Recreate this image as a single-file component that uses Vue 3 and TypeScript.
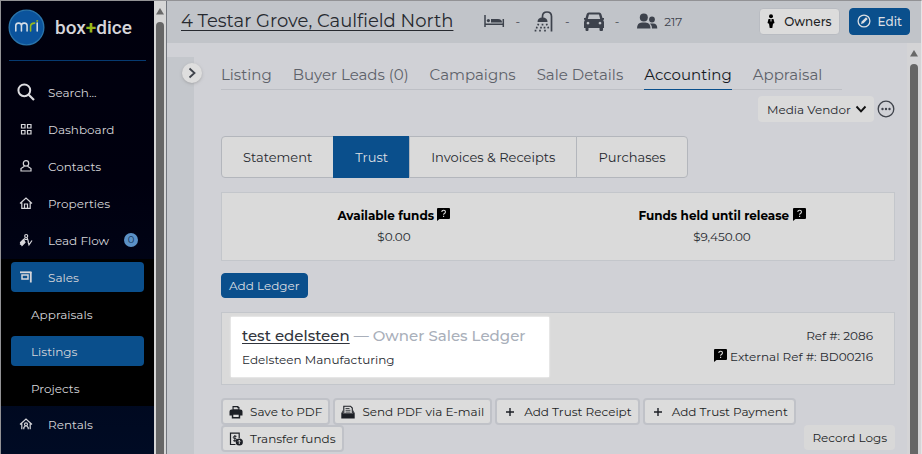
<script setup lang="ts">
import { ref } from 'vue'

interface NavItem { label: string; icon: string; badge?: number }

const navItems: NavItem[] = [
  { label: 'Dashboard', icon: 'grid' },
  { label: 'Contacts', icon: 'person' },
  { label: 'Properties', icon: 'home' },
  { label: 'Lead Flow', icon: 'flow', badge: 0 },
]
const salesItems: string[] = ['Appraisals', 'Listings', 'Projects']
const tabs: string[] = ['Listing', 'Buyer Leads (0)', 'Campaigns', 'Sale Details', 'Accounting', 'Appraisal']
const segments: string[] = ['Statement', 'Trust', 'Invoices & Receipts', 'Purchases']
const actions: NavItem[] = [
  { label: 'Save to PDF', icon: 'print' },
  { label: 'Send PDF via E-mail', icon: 'mail' },
  { label: 'Add Trust Receipt', icon: 'plus' },
  { label: 'Add Trust Payment', icon: 'plus' },
  { label: 'Transfer funds', icon: 'transfer' },
]

const activeSub = ref('Listings')
const activeTab = ref('Accounting')
const activeSegment = ref('Trust')
const recipient = ref('Media Vendor')
</script>

<template>
  <div class="app">
    <aside class="sidebar">
      <div class="brand">
        <svg class="logo" viewBox="0 0 38 38" aria-hidden="true">
          <circle cx="19" cy="19" r="17.8" fill="#0b539c" stroke="#2a74ab" stroke-width="1.4" />
          <g fill="none" stroke-width="1.6" stroke-linecap="round">
            <path d="M8 22.500v-5.200q0-2.800 2.600-2.800h.6q2.600 0 2.600 2.800v5.200M13.800 22.500v-5.200q0-2.800 2.600-2.800h.6q2.600 0 2.600 2.800v5.200" stroke="#d5dde6" />
            <path d="M23.200 22.500v-4.500q0-3.500 4.200-3.500" stroke="#97b81c" />
            <path d="M30 14.500v8" stroke="#d5dde6" />
          </g>
          <circle cx="30" cy="12.200" r="1" fill="#97b81c" />
        </svg>
        <span class="brand-name">box<span class="plus">+</span>dice</span>
      </div>

      <nav class="nav">
        <label class="nav-item">
          <svg class="search-icon" viewBox="0 0 18 18" aria-hidden="true">
            <circle cx="7.3" cy="7.3" r="5.9" fill="none" stroke="#dcdce0" stroke-width="2" />
            <path d="M11.700 11.700L17 17" stroke="#dcdce0" stroke-width="2.200" />
          </svg>
          <input class="search" type="text" placeholder="Search..." aria-label="Search" />
        </label>
        <a v-for="item in navItems" :key="item.label" class="nav-item" href="#">
          <svg class="nav-icon" viewBox="0 0 14 14" aria-hidden="true">
            <path v-if="item.icon === 'grid'" d="M2.500 2.500h3.500v3.500h-3.500zM8.500 2.500h3.500v3.500h-3.500zM2.500 8.500h3.500v3.500h-3.500zM8.500 8.500h3.500v3.500h-3.500z" />
            <g v-else-if="item.icon === 'person'">
              <circle cx="7" cy="4.400" r="2.700" />
              <path d="M5.500 7.300L2 9.500v2.500h10V9.500L8.500 7.300" />
            </g>
            <path v-else-if="item.icon === 'home'" d="M1 7.500L7 2l6 5.500M2.800 6.500v5.800h8.400V6.500M5.500 12V8h3v4" />
            <g v-else>
              <circle cx="7.200" cy="3" r="1.500" />
              <path d="M6.400 4.500L4 8M8 4.500l1.500 4.500M6 6.500h2.500M9 8.500l1 3.300L13 7.500M1 11.500l3-2.500" />
              <path d="M1.500 9.500L4.500 6.500l1.500 3L3 12.500z" fill="currentColor" />
            </g>
          </svg>
          <span>{{ item.label }}</span>
          <span v-if="item.badge !== undefined" class="badge">{{ item.badge }}</span>
        </a>
      </nav>

      <nav class="nav nav-open">
        <a class="nav-item active" href="#">
          <svg class="nav-icon" viewBox="0 0 14 14" aria-hidden="true">
            <path d="M1 2.300h11.500" stroke-width="1.800" />
            <path d="M11.800 2v10.500" stroke-width="1.800" />
            <path d="M3 5h6v4H3z" stroke-width="1.500" />
          </svg>
          <span>Sales</span>
        </a>
        <a
          v-for="label in salesItems"
          :key="label"
          class="nav-item sub"
          :class="{ active: label === activeSub }"
          href="#"
          @click.prevent="activeSub = label"
        >{{ label }}</a>
      </nav>

      <nav class="nav">
        <a class="nav-item" href="#">
          <svg class="nav-icon" viewBox="0 0 14 14" aria-hidden="true">
            <path d="M1 7.500L7 2l6 5.500M2.800 6.500v5.800M11.200 6.500v5.800M4.800 12.300V10.500l1.500-1.500M9.200 12.300V10.500L7.700 9" />
            <circle cx="7" cy="7.300" r="1.500" />
          </svg>
          <span>Rentals</span>
        </a>
      </nav>
    </aside>

    <div class="scrollbar side-bar" aria-hidden="true">
      <svg class="arrow" viewBox="0 0 8 7"><path d="M4 0l4 6.500H0z" /></svg>
      <div class="thumb"></div>
    </div>

    <div class="main">
      <header class="topbar">
        <a class="address" href="#">4 Testar Grove, Caulfield North</a>
        <div class="facts">
          <span class="fact">
            <svg class="fact-icon" viewBox="0 0 22 22" aria-hidden="true">
              <path d="M2 5v12M1.500 14.200h19M20.300 9v8" fill="none" stroke="currentColor" stroke-width="1.500" />
              <circle cx="5.400" cy="10.600" r="1.600" />
              <path d="M8 12.500V9h7q4 0 4 3.500z" />
            </svg>-
          </span>
          <span class="fact">
            <svg class="fact-icon" viewBox="0 0 22 22" aria-hidden="true">
              <path d="M18.500 21.500V6.500Q18.500 2 14 2t-4.500 4.500v1.500" fill="none" stroke="currentColor" stroke-width="1.700" />
              <path d="M4.500 12q0-4.500 5-4.500t5 4.500z" />
              <path d="M5.500 13.800l-.6 1.600M9.500 13.800v1.600M13.500 13.800l.6 1.600M4 16.800l-.5 1.600M8 16.800v1.600M11.500 16.800v1.600M15 16.800l.4 1.600M2.500 19.800v1.600M7 19.800v1.600M12 19.800v1.600" stroke="currentColor" stroke-width="1.700" />
            </svg>-
          </span>
          <span class="fact">
            <svg class="fact-icon" viewBox="0 0 22 22" aria-hidden="true">
              <path fill-rule="evenodd" d="M5.800 2.500h10.400q1.600 0 2.100 1.500L19.500 8H21v1.500l-.8.5.8 2v6h-1v2q0 1-1 1h-1.500q-1 0-1-1v-2h-11v2q0 1-1 1H3.500q-1 0-1-1v-2H1v-6l.8-2L1 9.500V8h1.500L3.700 4q.5-1.500 2.100-1.500zM6 4.500L4.800 9h12.400L16 4.500zM5 11.700a1.400 1.400 0 1 0 .01 0zM17 11.700a1.400 1.400 0 1 0 .01 0z" />
            </svg>-
          </span>
          <span class="fact people">
            <svg class="fact-icon" viewBox="0 0 22 22" aria-hidden="true">
              <circle cx="7.800" cy="7.500" r="4" />
              <path d="M1 18.500q0-6 5-6h3.500q5 0 5 6z" />
              <circle cx="16" cy="9.500" r="2.900" />
              <path d="M14 13.500h3q4.300 0 4.300 5H16q0-3-2-5z" />
            </svg>217
          </span>
        </div>
        <div class="top-actions">
          <button class="btn" type="button">
            <svg class="owner-icon" viewBox="0 0 8 14" aria-hidden="true">
              <circle cx="4" cy="2.200" r="2" />
              <path d="M1.500 5h5L7.500 9l-1.500.8L5.300 14H2.700L2 9.800.5 9z" />
              <path d="M4 4.800v2.700" stroke="#dcdcdc" />
            </svg>
            Owners
          </button>
          <button class="btn primary" type="button">
            <svg class="edit-icon" viewBox="0 0 14 14" aria-hidden="true">
              <circle cx="7" cy="7" r="5.900" fill="none" stroke="currentColor" stroke-width="1.300" />
              <path d="M4 10l.7-2.500L9 3.300 10.700 5 6.500 9.300z" fill="currentColor" />
            </svg>
            Edit
          </button>
        </div>
      </header>

      <div class="body">
        <div class="rail">
          <button class="expand" type="button" aria-label="Expand panel">
            <svg viewBox="0 0 10 12" aria-hidden="true"><path d="M2.500 1.500L7.500 6l-5 4.500" fill="none" stroke="#3f434b" stroke-width="1.800" /></svg>
          </button>
        </div>

        <main class="content">
          <nav class="tabs">
            <a
              v-for="tab in tabs"
              :key="tab"
              class="tab"
              :class="{ current: tab === activeTab }"
              href="#"
              @click.prevent="activeTab = tab"
            >{{ tab }}</a>
          </nav>

          <div class="tools">
            <div class="select-wrap">
              <select v-model="recipient" class="select" aria-label="Recipient">
                <option>Media Vendor</option>
              </select>
              <svg class="chevron" viewBox="0 0 12 8" aria-hidden="true"><path d="M1.500 1.500L6 6.300l4.500-4.800" fill="none" stroke="#111" stroke-width="1.900" /></svg>
            </div>
            <button class="more" type="button" aria-label="More options">
              <svg viewBox="0 0 18 18" aria-hidden="true">
                <circle cx="9" cy="9" r="7.800" fill="none" stroke="#3f434b" stroke-width="1.300" />
                <g fill="#3f434b"><circle cx="5.500" cy="9" r="1.200" /><circle cx="9" cy="9" r="1.200" /><circle cx="12.500" cy="9" r="1.200" /></g>
              </svg>
            </button>
          </div>

          <div class="segments">
            <button
              v-for="segment in segments"
              :key="segment"
              class="segment"
              :class="{ chosen: segment === activeSegment }"
              type="button"
              @click="activeSegment = segment"
            >{{ segment }}</button>
          </div>

          <section class="card funds">
            <div class="fund">
              <strong>Available funds
                <svg class="help" viewBox="0 0 13 13" aria-hidden="true"><path d="M1 0h11q1 0 1 1v9q0 1-1 1H2.500L0 13V1Q0 0 1 0z" /><path d="M4.800 4q0-1.700 1.800-1.700T8.400 4q0 1-1 1.400-.8.400-.8 1.300M6.600 7.700V9" fill="none" stroke="#dcdcdc" stroke-width="1.100" /></svg>
              </strong>
              <span>$0.00</span>
            </div>
            <div class="fund">
              <strong>Funds held until release
                <svg class="help" viewBox="0 0 13 13" aria-hidden="true"><path d="M1 0h11q1 0 1 1v9q0 1-1 1H2.500L0 13V1Q0 0 1 0z" /><path d="M4.800 4q0-1.700 1.800-1.700T8.400 4q0 1-1 1.400-.8.400-.8 1.300M6.600 7.700V9" fill="none" stroke="#dcdcdc" stroke-width="1.100" /></svg>
              </strong>
              <span>$9,450.00</span>
            </div>
          </section>

          <button class="btn primary add" type="button">Add Ledger</button>

          <section class="card ledger">
            <div class="spotlight">
              <h2 class="ledger-title"><a href="#">test edelsteen</a> — Owner Sales Ledger</h2>
              <p>Edelsteen Manufacturing</p>
            </div>
            <div class="refs">
              <span>Ref #: 2086</span>
              <span>
                <svg class="help" viewBox="0 0 13 13" aria-hidden="true"><path d="M1 0h11q1 0 1 1v9q0 1-1 1H2.500L0 13V1Q0 0 1 0z" /><path d="M4.800 4q0-1.700 1.800-1.700T8.400 4q0 1-1 1.400-.8.400-.8 1.300M6.600 7.700V9" fill="none" stroke="#dcdcdc" stroke-width="1.100" /></svg>
                External Ref #: BD00216
              </span>
            </div>
          </section>

          <div class="actions">
            <button v-for="action in actions" :key="action.label" class="btn action" type="button">
              <svg class="action-icon" viewBox="0 0 14 14" aria-hidden="true">
                <g v-if="action.icon === 'print'">
                  <path d="M3.500 1h5.500l1.500 1.500V5h-7z" />
                  <path d="M4.600 2.200h3.700v1h1v1.300H4.600z" fill="#dcdcdc" />
                  <path fill-rule="evenodd" d="M2.500 4.500h9Q13.500 4.500 13.500 6.500v4h-2.300V13.500H2.800V10.500H.5v-4Q.5 4.500 2.500 4.500zM4.300 9.800v2.300h5.400V9.800z" />
                </g>
                <g v-else-if="action.icon === 'mail'">
                  <path d="M2.800 8V1.200h6.700L11.300 3v5" fill="none" stroke="currentColor" stroke-width="1.100" />
                  <path d="M4.500 3.500h4M4.500 5.300h5M4.500 7.100h5" stroke="currentColor" stroke-width=".8" />
                  <path d="M.3 8.300L1.800 5v3.300h10.400V5l1.500 3.300v5.200H.3z" />
                </g>
                <path v-else-if="action.icon === 'plus'" d="M7 3v8M3 7h8" stroke="currentColor" stroke-width="1.400" />
                <g v-else>
                  <path d="M10.200 6V1.200H1.500v11.300H6.500" fill="none" stroke="currentColor" stroke-width="1.200" />
                  <path d="M7.500 4.300H5.500q-1.200 0-1.200 1.100t1.200 1.100h.8q1.200 0 1.200 1.100t-1.200 1.100H4.200M5.900 3v7" fill="none" stroke="currentColor" />
                  <circle cx="10.300" cy="10" r="3.600" />
                  <path d="M10.300 12V8.300M9 9.500l1.300-1.300 1.300 1.300" fill="none" stroke="#dcdcdc" stroke-width=".9" />
                </g>
              </svg>
              {{ action.label }}
            </button>
            <button class="btn logs" type="button">Record Logs</button>
          </div>
        </main>

        <div class="scrollbar page-bar" aria-hidden="true">
          <svg class="arrow" viewBox="0 0 8 7"><path d="M4 0l4 6.500H0z" /></svg>
          <div class="thumb"></div>
        </div>
      </div>
    </div>
  </div>
</template>

<style>
body {
  margin: 0;
  overflow: hidden;
}
</style>

<style scoped>
* {
  box-sizing: border-box;
}
.app {
  display: flex;
  height: 100vh;
  overflow: hidden;
  border-top: 1px solid #929295;
  border-left: 1px solid #929295;
  border-right: 1px solid #e4e4e6;
  background: #d0d1d6;
  color: #26292f;
  font-family: Montserrat, Inter, sans-serif;
  font-size: 12px;
}
a {
  color: inherit;
  text-decoration: none;
}
button,
input,
select {
  font: inherit;
  color: inherit;
}
button {
  cursor: pointer;
}

.sidebar {
  flex: 0 0 153px;
  background: linear-gradient(#00000d, #00000f 40%, #000b24);
  color: #d6d6da;
}
.brand {
  display: flex;
  align-items: center;
  gap: 10px;
  height: 60px;
  margin: 0 8px 13px;
  padding-bottom: 6px;
  border-bottom: 1px solid #063a70;
}
.logo {
  flex: none;
  width: 37px;
  height: 37px;
  margin-left: -1px;
}
.brand-name {
  font-family: Roboto, sans-serif;
  font-size: 19px;
  font-weight: 500;
}
.plus {
  color: #97b81c;
  font-weight: 700;
}
.nav {
  display: flex;
  flex-direction: column;
  gap: 7px;
  padding: 3px 10px 4px;
}
.nav-open {
  padding-bottom: 3px;
  background: #000;
}
.nav-item {
  display: flex;
  align-items: center;
  gap: 15px;
  height: 30px;
  padding-left: 8px;
  border-radius: 4px;
  white-space: nowrap;
}
.nav-item.sub {
  padding-left: 20px;
}
.nav-item.active {
  background: #0a4f8c;
}
.nav-icon {
  flex: none;
  width: 14px;
  height: 14px;
  fill: none;
  stroke: currentColor;
  stroke-width: 1.2;
}
.search-icon {
  flex: none;
  width: 18px;
  height: 18px;
  margin: 0 -2px;
}
.search {
  width: 80px;
  padding: 0;
  border: 0;
  outline: 0;
  background: none;
}
.search::placeholder {
  color: inherit;
  opacity: 1;
}
.badge {
  width: 14px;
  height: 14px;
  border-radius: 50%;
  background: #5b91c6;
  color: #12335a;
  font-size: 10px;
  line-height: 14px;
  text-align: center;
}

.scrollbar {
  display: flex;
  flex-direction: column;
  align-items: center;
  flex: none;
}
.side-bar {
  width: 13px;
  border-right: 1px solid #72767e;
  background: #d6d6d6;
}
.page-bar {
  width: 14px;
  background: #d4d4d6;
}
.arrow {
  width: 8px;
  height: 7px;
  margin: 7px 0;
  fill: #686868;
}
.thumb {
  flex: 1;
  width: 8px;
  border-radius: 4px 4px 0 0;
  background: #666;
}

.main {
  display: flex;
  flex: 1;
  flex-direction: column;
  min-width: 0;
}
.topbar {
  display: flex;
  align-items: center;
  flex: none;
  height: 42px;
  padding: 0 11px 2px 14px;
  background: #c1c4c9;
}
.address {
  font-size: 18px;
  text-decoration: underline;
  text-decoration-thickness: 1px;
  text-underline-offset: 3px;
  white-space: nowrap;
}
.facts {
  display: flex;
  gap: 13px;
  margin-left: 30px;
  color: #3d424c;
}
.fact {
  display: flex;
  align-items: center;
  gap: 10px;
}
.people {
  gap: 6px;
  margin-left: 4px;
}
.fact-icon {
  width: 22px;
  height: 22px;
  fill: currentColor;
}
.top-actions {
  display: flex;
  gap: 9px;
  margin-left: auto;
}
.btn {
  display: inline-flex;
  align-items: center;
  justify-content: center;
  gap: 7px;
  height: 27px;
  padding: 0 7px;
  border: 1px solid #b9bcc2;
  border-radius: 4px;
  background: #dcdcdc;
  color: #1c1f25;
  white-space: nowrap;
}
.btn.primary {
  border-color: #0a4f8c;
  background: #0a4f8c;
  color: #dcdfe3;
}
.top-actions .btn {
  font-weight: 500;
}
.owner-icon {
  width: 8px;
  height: 14px;
  margin-right: 2px;
}
.edit-icon {
  width: 14px;
  height: 14px;
}

.body {
  display: flex;
  flex: 1;
  min-height: 0;
}
.rail {
  flex: 0 0 27px;
  min-width: 0;
  width: 27px;
  margin-top: 14px;
  padding: 6px 0 0 15px;
  background: #c4c7cc;
}
.expand {
  display: flex;
  align-items: center;
  justify-content: center;
  width: 20px;
  height: 20px;
  padding: 0;
  border: 0;
  border-radius: 50%;
  background: #dedede;
  box-shadow: 0 1px 3px #8888;
}
.expand svg {
  flex: none;
  width: 10px;
  height: 12px;
}
.content {
  flex: 1;
  min-width: 0;
  padding: 18px 12px 0 27px;
}
.tabs {
  display: flex;
  gap: 21px;
  width: fit-content;
  padding-right: 20px;
  border-bottom: 1px solid #bdbfc5;
}
.tab {
  height: 29px;
  margin-bottom: -1px;
  border-bottom: 1px solid transparent;
  color: #5e626a;
  font-size: 15px;
  line-height: 28px;
  white-space: nowrap;
}
.tab.current {
  border-color: #0a4f8c;
  color: #16191f;
}
.tools {
  display: flex;
  justify-content: flex-end;
  align-items: center;
  gap: 3px;
  margin-top: 6px;
}
.select-wrap {
  display: flex;
  align-items: center;
  width: 116px;
  height: 26px;
  border-radius: 4px;
  background: #dadada;
}
.select {
  width: 100%;
  height: 26px;
  padding: 0 0 0 9px;
  border: 0;
  appearance: none;
  background: none;
}
.chevron {
  flex: none;
  width: 12px;
  height: 8px;
  margin-right: 7px;
}
.more {
  display: flex;
  padding: 0;
  border: 0;
  background: none;
}
.more svg {
  width: 18px;
  height: 18px;
}
.segments {
  display: flex;
  width: fit-content;
  margin-top: 14px;
}
.segment {
  height: 42px;
  margin-left: -1px;
  padding: 0 21px;
  border: 1px solid #b3b6bc;
  background: #dadada;
  font-size: 13px;
  white-space: nowrap;
}
.segment:first-child {
  margin-left: 0;
  border-radius: 4px 0 0 4px;
}
.segment:last-child {
  border-radius: 0 4px 4px 0;
}
.segment.chosen {
  border-color: #0a4f8c;
  background: #0a4f8c;
  color: #dcdfe3;
}
.card {
  border: 1px solid #c3c6cb;
  background: #dadada;
}
.funds {
  display: grid;
  grid-template-columns: 1fr 1fr;
  margin-top: 14px;
  padding: 12px 8px 13px;
}
.fund {
  display: flex;
  flex-direction: column;
  align-items: center;
  line-height: 21px;
}
.fund strong {
  color: #000;
  font-weight: 700;
}
.help {
  width: 13px;
  height: 13px;
  fill: #000;
  vertical-align: -1px;
}
.add {
  height: 25px;
  margin-top: 12px;
}
.ledger {
  display: flex;
  justify-content: space-between;
  align-items: flex-start;
  margin-top: 14px;
  padding: 4px 21px 7px 9px;
}
.spotlight {
  width: 318px;
  padding: 8px 11px 7px;
  background: #fff;
  box-shadow: 0 0 2px #fff;
}
.ledger-title {
  margin: 0;
  color: #a9afba;
  font-size: 15px;
  font-weight: 500;
  line-height: 22px;
  white-space: nowrap;
}
.ledger-title a {
  color: #30343c;
  text-decoration: underline;
  text-underline-offset: 2px;
}
.spotlight p {
  margin: 3px 0 0;
  line-height: 20px;
}
.refs {
  display: flex;
  flex-direction: column;
  align-items: flex-end;
  padding-top: 8px;
  line-height: 21px;
}
.actions {
  display: flex;
  flex-wrap: wrap;
  column-gap: 3px;
  margin-top: 13px;
}
.action {
  padding: 0 6px;
  border-width: 2px;
  border-color: #c0c2c8;
}
.action-icon {
  width: 14px;
  height: 14px;
  fill: currentColor;
}
.logs {
  height: 25px;
  margin-left: auto;
  border-color: transparent;
  background: #d8d8d8;
}
</style>
